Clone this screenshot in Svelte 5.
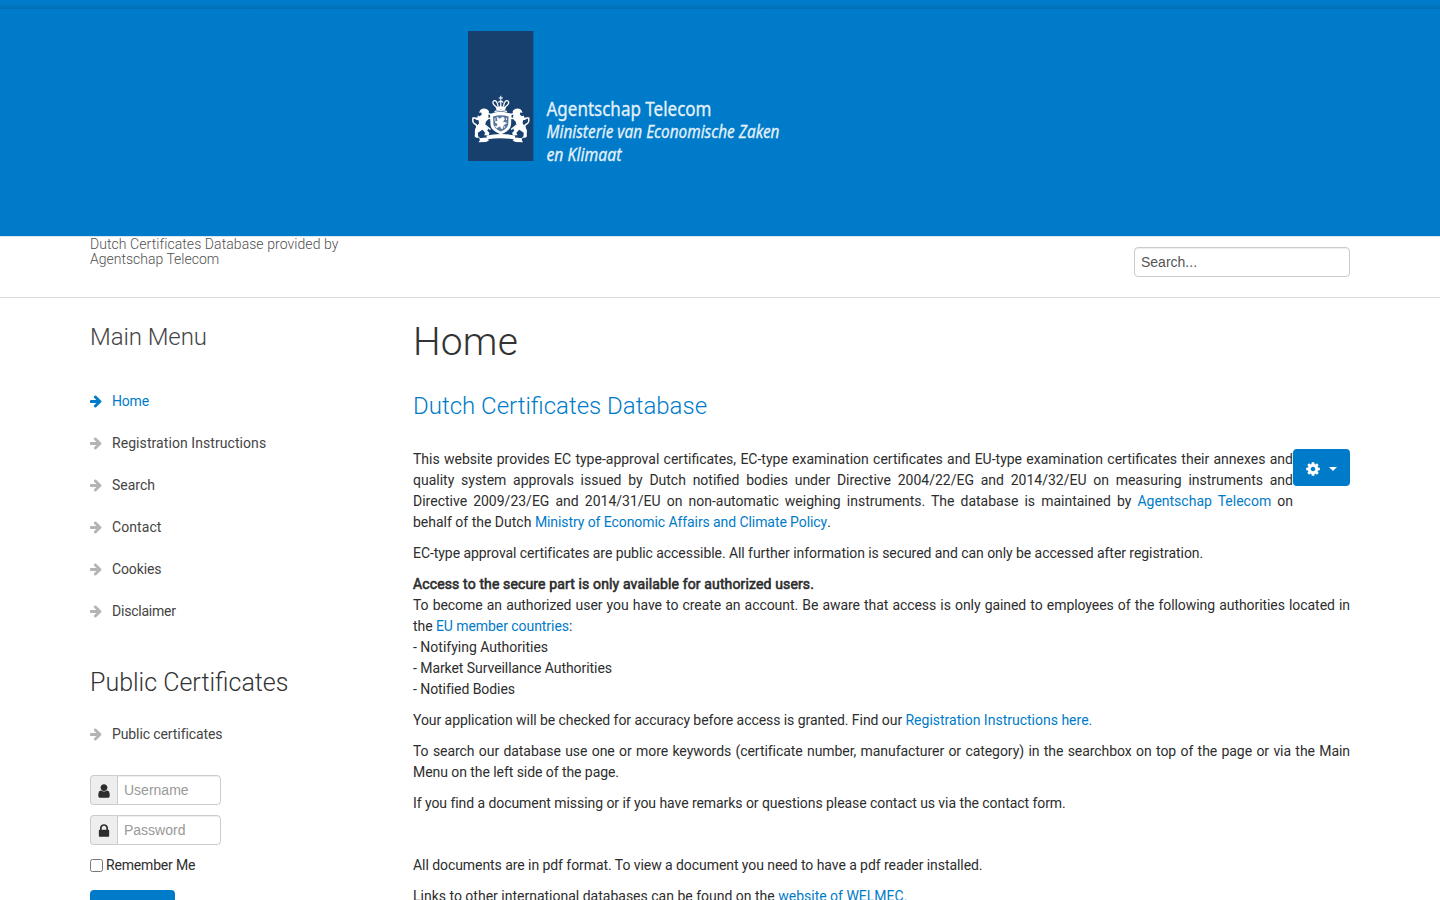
<script>
  const menu = [['Home', -0.2], ['Registration Instructions', 0.07], ['Search', 0], ['Contact', 0.08], ['Cookies', -0.12], ['Disclaimer', -0.22]];
  const arrow = 'M1472 960q0 54-37 91l-651 651q-39 37-91 37-51 0-90-37l-75-75q-38-38-38-91t38-91l293-293H117q-52 0-84.500-37.500T0 1024V896q0-53 32.500-90.500T117 768h704L528 474q-38-36-38-90t38-90l75-75q38-38 90-38 53 0 91 38l651 651q37 35 37 90z';
  const gear = 'M1152 896q0-106-75-181t-181-75-181 75-75 181 75 181 181 75 181-75 75-181zm512-109v222q0 12-8 23t-20 13l-185 28q-19 54-39 91 35 50 107 138 10 12 10 25t-9 23q-27 37-99 108t-94 71q-12 0-26-9l-138-108q-44 23-91 38-16 136-29 186-7 28-36 28H785q-14 0-24.500-8.500T749 1634l-28-184q-49-16-90-37l-141 107q-10 9-25 9-14 0-25-11-126-114-165-168-7-10-7-23 0-12 8-23 15-21 51-66.500t54-70.500q-27-50-41-99l-183-27q-13-2-21-12.500t-8-23.500V783q0-12 8-23t19-13l186-28q14-46 39-92-40-57-107-138-10-12-10-24 0-10 9-23 26-36 98.500-107.500T465 263q13 0 26 10l138 107q44-23 91-38 16-136 29-186 7-28 36-28h222q14 0 24.500 8.500T1043 158l28 184q49 16 90 37l142-107q9-9 24-9 13 0 25 10 129 119 165 170 7 8 7 22 0 12-8 23-15 21-51 66.500t-54 70.500q26 50 41 98l183 28q13 2 21 12.500t8 23.500z';
  const user = 'M1536 1399q0 109-62.500 187t-150.500 78H469q-88 0-150.500-78T256 1399q0-85 8.500-160.500t31.500-152 58.500-131 94-89T583 832q131 128 313 128t313-128q76 0 134.500 34.500t94 89 58.500 131 31.500 152 8.500 160.500zm-256-887q0 159-112.500 271.500T896 896 624.500 783.500 512 512t112.500-271.500T896 128t271.500 112.500T1280 512z';
  const lock = 'M640 768h512V576q0-106-75-181t-181-75-181 75-75 181v192zm832 96v576q0 40-28 68t-68 28H416q-40 0-68-28t-28-68V864q0-40 28-68t68-28h32V576q0-184 132-316t316-132 316 132 132 316v192h32q40 0 68 28t28 68z';
</script>

<div class="page">
  <div class="strip"></div>
  <div class="banner">
    <svg class="logo" width="330" height="140" viewBox="0 0 330 140">
      <rect x="0" y="0" width="65.300" height="130" fill="#17406f" />
      <g fill="#fff">
        <path d="M32.300 64.800h1v1.800h1.600v1h-1.600v2h-1v-2h-1.600v-1h1.600z" />
        <path d="M28.500 79.300l-.9-3.300q5.200-1.300 10.400 0l-.9 3.300q-4.300-1-8.600 0z" />
        <path d="M22 83q10.800-4.500 21.600 0l-.6 11q-.5 5.500-10.200 9.500Q23 99.500 22.500 94z" />
      </g>
      <g fill="none" stroke="#fff" stroke-linecap="round" stroke-linejoin="round">
        <path d="M28.400 76q-5.400-4-2.500-6.200 3-1 4.200 5.400M37.200 76q5.400-4 2.500-6.200-3-1-4.200 5.400M32.800 70.500v5M30.800 71.200q2-2.600 4 0" stroke-width="1.300" />
        <path d="M27 80.300q5.800-1.500 11.600 0" stroke-width="1.200" />
      </g>
      <path d="M25 85.500q7.800-2.600 15.600 0l-.4 8q-.6 4-7.400 7-6.800-3-7.400-7z" fill="#58779c" />
      <path d="M29 86l2.500 2 3.500-2 1.500 2-2 3 4 1-3 2-1.500 4-2-3-4 2 2-4-3-2 3-1zM27 87v3M38.500 87v2M26.500 95l2 1M37 95l-1 2" fill="#fff" stroke="#fff" stroke-width=".8" />
      <g id="lion">
        <path d="M12 79.500q1-2 4-2 4 .2 5 3.200l-.7 3.300q1 4-2.300 6.500l-1 4 3.600 3.200-1.400 1.700 2.300 2.500-.8 2.300h-4.500l1-2.500-2.800-3-4.500 3 .2 3.500 2 1.600h-3.800l-1.600-1.400.4-6.500q.8-4 3.900-6.300l-.4-3.300q-3.500-.1-4.400-2.700h3.300l.3-2 2 .6 2-1.600-.5-2.100-2.300.2z" fill="#fff" />
        <path d="M9.300 103.500q-3-2-1-6 1.700-3-1.300-4.500T5 87h2M19 82.500l4 1M18 88l5-1M17 94l5.500 4.500" fill="none" stroke="#fff" stroke-width="1.500" />
      </g>
      <use href="#lion" transform="translate(65.600 0) scale(-1 1)" />
      <path d="M18.500 104.500q14.300-3 28.600 0v4q-14.300-2.500-28.600 0z" fill="#fff" />
      <path d="M18 106.500l-7 .8 1 1.800-1.500 2.200 7.500-.4 3-1.500M47.600 106.500l7 .8-1 1.800 1.500 2.200-7.500-.4-3-1.500" fill="#fff" />
      <text x="78.500" y="84.500" class="l1" textLength="165" lengthAdjust="spacingAndGlyphs">Agentschap Telecom</text>
      <text x="78.500" y="107" class="l2" textLength="233" lengthAdjust="spacingAndGlyphs">Ministerie van Economische Zaken</text>
      <text x="78.500" y="130" class="l2" textLength="75" lengthAdjust="spacingAndGlyphs">en Klimaat</text>
    </svg>
  </div>
  <header>
    <div class="wrap bar">
      <p class="slogan"><span>Dutch Certificates Database provided by</span> Agentschap Telecom</p>
      <input class="field search" type="text" placeholder="Search..." />
    </div>
  </header>
  <div class="wrap cols">
    <aside>
      <h3 class="mm">Main Menu</h3>
      <ul>
        {#each menu as [item, spacing], i}
          <li class:active={i === 0} style:letter-spacing={`${spacing}px`}><svg width="12" height="14" viewBox="0 0 1536 1792"><path d={arrow} /></svg>{item}</li>
        {/each}
      </ul>
      <h3 class="pc">Public Certificates</h3>
      <ul>
        <li class="tight"><svg width="12" height="14" viewBox="0 0 1536 1792"><path d={arrow} /></svg>Public certificates</li>
      </ul>
      <form>
        {#each [['Username', user], ['Password', lock]] as [label, icon]}
          <div class="group">
            <span class="addon"><svg width="16" height="16" viewBox="0 0 1792 1792"><path d={icon} /></svg></span>
            <input class="field" type="text" placeholder={label} />
          </div>
        {/each}
        <label><input type="checkbox" />Remember Me</label>
        <button type="button" class="login" aria-label="Log in"></button>
      </form>
    </aside>
    <main>
      <h1>Home</h1>
      <h2>Dutch Certificates Database</h2>
      <button type="button" class="gear" aria-label="Options"><svg width="16" height="16" viewBox="0 0 1792 1792"><path d={gear} /></svg><i></i></button>
      <p class="even">This website provides EC type-approval certificates, EC-type examination certificates and EU-type examination certificates their annexes and quality system approvals issued by Dutch notified bodies under Directive 2004/22/EG and 2014/32/EU on measuring instruments and Directive 2009/23/EG and 2014/31/EU on non-automatic weighing instruments. The database is maintained by <a href="#t">Agentschap Telecom</a> on behalf&nbsp;of&nbsp;the Dutch <a href="#t" class="ministry">Ministry of Economic Affairs and Climate Policy</a>.</p>
      <p>EC-type approval certificates are public accessible. All further information is secured and can only be accessed after registration.</p>
      <p><span class="strong">Access to the secure part is only available for authorized users.</span><br />To become an authorized user you have to create an account. Be aware that access is only gained to employees of the following authorities located in the <a href="#t">EU member countries</a>:<br /><span class="even">- Notifying Authorities</span><br />- Market Surveillance Authorities<br />- Notified Bodies</p>
      <p>Your application will be checked for accuracy before access is granted. Find our <a class="even" href="#t">Registration Instructions here.</a></p>
      <p>To search our database use one or more keywords (certificate number, manufacturer or category) in the searchbox on top of the page or via the Main Menu on the left side of the page.</p>
      <p>If you find a document missing or if you have remarks or questions please contact us via the contact form.</p>
      <p>&nbsp;</p>
      <p>All documents are in pdf format. To view a document you need to have a pdf reader installed.</p>
      <p class="even">Links to other international databases can be found on the <a href="#t">website of WELMEC.</a></p>
    </main>
  </div>
</div>

<style>
  :global(body) { margin: 0; background: #fff; overflow: hidden; }
  .page { height: 900px; overflow: hidden; font: 14px/21px Roboto, sans-serif; color: #2d2d2d; }
  .page *, .page { box-sizing: border-box; }
  .strip { height: 9px; background: linear-gradient(#007bc9 35%, #006fb4); }
  .banner { height: 227px; background: #007bc9; padding: 22px 0 0 468px; }
  .logo { display: block; overflow: visible; }
  .logo text { fill: #e4f1fa; stroke: #e4f1fa; stroke-width: .3px; font-family: "Noto Sans", sans-serif; }
  .l1 { font-size: 19.500px; }
  .l2 { font-size: 18.500px; font-style: italic; }
  header { height: 62px; border-top: 1px solid #d5e6f2; border-bottom: 1px solid #d9d9d9; }
  .wrap { width: 1260px; margin: 0 auto; }
  .bar { display: flex; justify-content: space-between; }
  .slogan { margin: 0; width: 270px; font-weight: 300; line-height: 15px; color: #505050; }
  .slogan span { letter-spacing: .07px; }
  .field { font: 14px/20px "Liberation Sans", Arial, sans-serif; height: 30px; padding: 4px 6px; border: 1px solid #ccc; border-radius: 4px; background: #fff; box-shadow: inset 0 1px 1px rgba(0, 0, 0, .075); color: #555; outline: 0; margin: 0; }
  .field::placeholder { color: #999; opacity: 1; }
  .search { width: 216px; margin-top: 10px; }
  .search::placeholder { color: #555; }
  .cols { display: grid; grid-template-columns: 290px 937px; gap: 33px; }
  h1, h2, h3 { margin: 0; font-weight: 300; }
  h3 { font-size: 24px; line-height: 30px; color: #444; }
  .mm { margin-top: 24px; letter-spacing: -.08px; }
  .pc { margin-top: 36px; font-size: 25px; color: #333; }
  ul { list-style: none; margin: 0; padding: 0; }
  .mm + ul { padding-top: 28px; }
  .pc + ul { padding-top: 15px; }
  li { height: 42px; line-height: 42px; display: flex; align-items: center; gap: 10px; color: #444; }
  li svg { fill: #b4b4b4; }
  .tight { letter-spacing: -.1px; }
  .active { color: #007bc9; }
  .active svg { fill: #007bc9; }
  form { padding-top: 20px; }
  .group { display: flex; margin-bottom: 10px; width: 131px; }
  .addon { width: 28px; height: 30px; border: 1px solid #ccc; border-right: 0; border-radius: 4px 0 0 4px; background: #eee; display: flex; align-items: center; justify-content: center; padding-top: 2px; }
  .addon svg { fill: #2d2d2d; }
  .group .field { width: 104px; border-radius: 0 4px 4px 0; }
  label { display: flex; align-items: center; gap: 3px; height: 21px; letter-spacing: -.18px; }
  label input { margin: 0; width: 13px; height: 13px; }
  .login { display: block; margin-top: 14px; width: 85px; height: 37px; border: 0; border-radius: 4px; background: #007bc9; }
  h1 { font-size: 39px; line-height: 40px; margin-top: 24px; color: #333; letter-spacing: .2px; }
  h2 { font-size: 24px; line-height: 30px; margin-top: 29px; margin-bottom: 28px; color: #007bc9; }
  p { margin: 0 0 10px; }
  main p { text-align: justify; letter-spacing: -.062px; }
  main .even { letter-spacing: 0; }
  .ministry { letter-spacing: -.08px; }
  a { color: #007bc9; text-decoration: none; }
  .strong { -webkit-text-stroke: .6px #2d2d2d; letter-spacing: .135px; }
  .gear { float: right; width: 57px; height: 37px; margin-bottom: 10px; border: 0; border-radius: 4px; background: #007bc9; display: flex; align-items: center; padding: 3px 0 0 12px; gap: 8px; }
  .gear svg { fill: #fff; }
  .gear i { border: 4px solid transparent; border-top-color: #fff; border-bottom: 0; }
</style>
